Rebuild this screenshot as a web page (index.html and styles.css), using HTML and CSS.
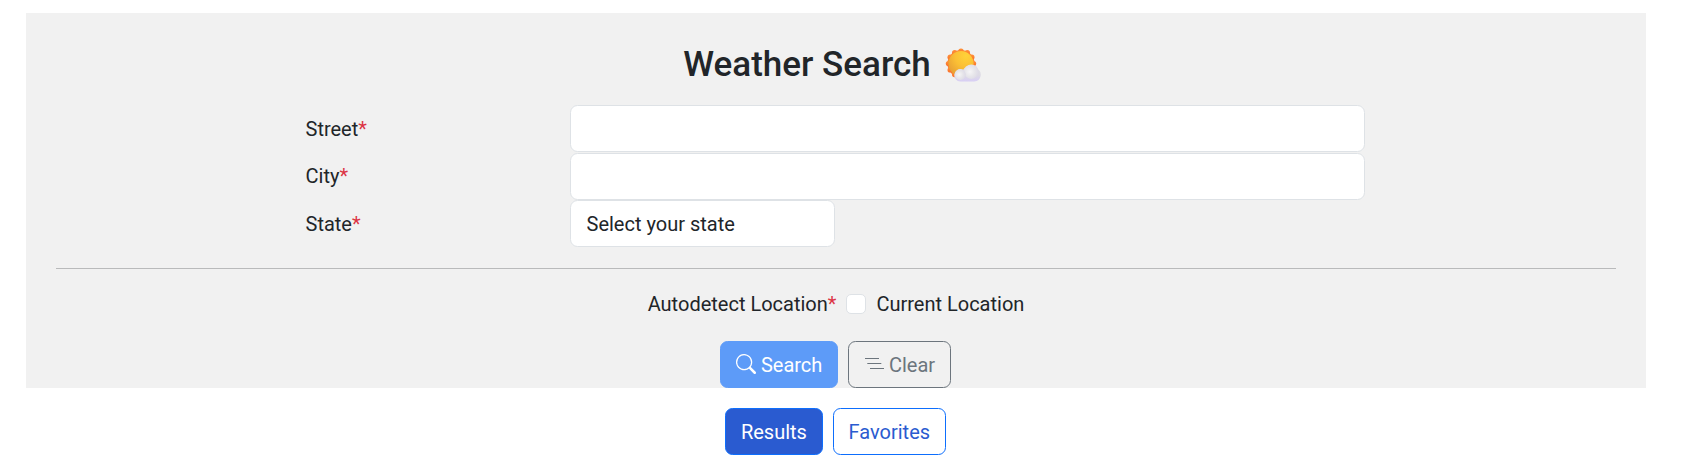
FILE: index.html
```html
<!DOCTYPE html>
<html lang="en">
<head>
<meta charset="utf-8">
<title>Weather Search</title>
<link rel="stylesheet" href="styles.css">
</head>
<body>
<main class="page">
  <form class="panel">
    <h1 class="title"><span class="title-text">Weather Search</span>
      <svg class="weather-icon" viewBox="0 0 36 34" aria-hidden="true">
        <defs>
          <linearGradient id="rays" x1="0" y1="0" x2="0" y2="1"><stop offset="0" stop-color="#ff9136"/><stop offset="1" stop-color="#f9702c"/></linearGradient>
          <radialGradient id="sun" cx=".7" cy=".2" r=".85"><stop offset="0" stop-color="#ffd238"/><stop offset=".5" stop-color="#fbc035"/><stop offset="1" stop-color="#e8a035"/></radialGradient>
          <linearGradient id="cloud" x1="0" y1="0" x2="0" y2="1"><stop offset="0" stop-color="#e2e1e6"/><stop offset=".6" stop-color="#dddbe4"/><stop offset="1" stop-color="#d8cef5"/></linearGradient>
          <radialGradient id="puff" cx=".4" cy=".5" r=".6"><stop offset="0" stop-color="#f6f5f7"/><stop offset=".55" stop-color="#e7e6ea"/><stop offset="1" stop-color="#dddae6"/></radialGradient>
        </defs>
        <g fill="url(#rays)">
          <circle cx="16" cy="15.6" r="13.6"/>
          <circle cx="16" cy="3.1" r="2.7"/><circle cx="22.3" cy="4.7" r="2.7"/><circle cx="26.8" cy="9.3" r="2.7"/><circle cx="28.5" cy="15.6" r="2.7"/><circle cx="9.7" cy="4.7" r="2.7"/><circle cx="5.2" cy="9.3" r="2.7"/><circle cx="3.5" cy="15.6" r="2.7"/><circle cx="5.2" cy="21.9" r="2.7"/><circle cx="9.7" cy="26.5" r="2.7"/>
        </g>
        <circle cx="16" cy="15.6" r="12.6" fill="url(#sun)"/>
        <path d="M15.5 33.5a6.2 6.2 0 1 1 2.600-11.800 8.300 8.300 0 0 1 13.300-1 6.600 6.600 0 0 1-2.400 12.800z" fill="url(#cloud)"/>
        <circle cx="26.3" cy="23.7" r="7.3" fill="url(#puff)"/>
        <circle cx="15.3" cy="26.5" r="5.4" fill="url(#puff)"/>
      </svg>
    </h1>
    <div class="fields">
      <label class="label" for="street">Street<span class="required">*</span></label>
      <input class="control" id="street" type="text">
      <label class="label" for="city">City<span class="required">*</span></label>
      <input class="control" id="city" type="text">
      <label class="label" for="state">State<span class="required">*</span></label>
      <select class="control state" id="state"><option>Select your state</option></select>
    </div>
    <hr class="divider">
    <div class="autodetect">
      <span>Autodetect Location<span class="required">*</span></span>
      <input class="checkbox" type="checkbox" id="current">
      <label for="current">Current Location</label>
    </div>
    <div class="buttons">
      <button class="btn search" type="button"><svg class="icon" viewBox="0 0 16 16" fill="currentColor" aria-hidden="true"><path d="M11.742 10.344a6.5 6.5 0 1 0-1.397 1.398h-.001q.044.06.098.115l3.85 3.85a1 1 0 0 0 1.415-1.414l-3.85-3.85a1 1 0 0 0-.115-.1zM12 6.5a5.5 5.5 0 1 1-11 0 5.5 5.5 0 0 1 11 0"/></svg><span>Search</span></button>
      <button class="btn clear" type="button"><svg class="icon" viewBox="0 0 20 20" aria-hidden="true"><path d="M1 4.5h14M3.3 9.5h14M6 14.5h14" fill="none" stroke="currentColor" stroke-width="1.1"/></svg><span>Clear</span></button>
    </div>
  </form>
  <div class="tabs">
    <button class="btn active" type="button">Results</button>
    <button class="btn outline" type="button">Favorites</button>
  </div>
</main>
</body>
</html>
```
FILE: styles.css
```css
* { box-sizing: border-box; }
body {
  margin: 0;
  background: #fff;
  color: #212529;
  font: 400 20px/30px Roboto, "Liberation Sans", sans-serif;
}
.page { padding: 13px 56px 0 26px; }
.panel {
  height: 375px;
  padding: 30px 30px 0;
  background: #f1f1f1;
}
.title {
  display: flex;
  justify-content: center;
  align-items: flex-start;
  gap: 14px;
  height: 42px;
  margin: 0 0 20px;
  padding-right: 8px;
  font-size: 35px;
  font-weight: 500;
  line-height: 42px;
}
.title-text { padding-top: 1px; }
.weather-icon { width: 36px; height: 34px; margin-top: 5px; }
.fields {
  display: grid;
  grid-template-columns: 264.5px 795px;
  grid-auto-rows: 47.5px;
  align-items: start;
  justify-content: start;
  height: 143px;
  padding-left: 249.5px;
}
.label { padding-top: 8.7px; }
.required { color: #dc3545; }
.control {
  width: 100%;
  height: 47px;
  padding: 8px 15px 7px;
  border: 1px solid #dee2e6;
  border-radius: 7.5px;
  background: #fff;
  color: inherit;
  font: inherit;
  appearance: none;
}
.state { width: 265px; padding-left: 15.5px; }
.divider {
  height: 1px;
  margin: 20px 0 0;
  border: 0;
  background: #b9babb;
}
.autodetect {
  display: flex;
  justify-content: center;
  align-items: center;
  gap: 10px;
  margin-top: 20px;
}
.checkbox {
  width: 20px;
  height: 20px;
  margin: 0;
  border: 1px solid #dee2e6;
  border-radius: 5px;
  background: #fff;
  appearance: none;
}
.buttons, .tabs {
  display: flex;
  justify-content: center;
  gap: 10px;
  padding-right: 1px;
}
.buttons { margin-top: 22px; }
.tabs { margin-top: 20px; }
.btn {
  display: flex;
  align-items: center;
  gap: 5px;
  height: 47px;
  padding: 8px 14.8px 7px;
  border: 1px solid #0d6efd;
  border-radius: 7.5px;
  background: transparent;
  font: inherit;
}
.icon { width: 20px; height: 20px; margin-bottom: 2px; }
.search { border-color: #5d9bf8; background: #5d9bf8; color: #fff; }
.clear { border-color: #6c757d; color: #6c757d; }
.active { background: #2a5bd0; color: #fff; }
.outline { color: #2a5bd0; }
```
